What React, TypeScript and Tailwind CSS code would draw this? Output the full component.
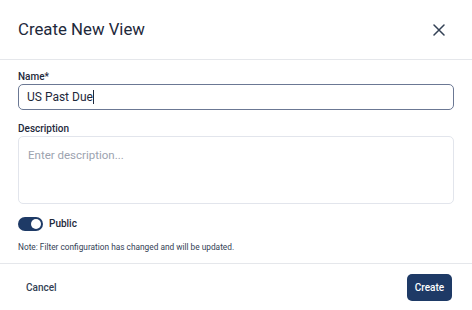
import React from 'react';

const App: React.FC = () => {
  return (
    <div className="w-[472px] h-[310px] bg-white flex flex-col text-[#1e293b]" style={{ fontFamily: 'Roboto, "Noto Sans", sans-serif' }}>
      {/* Header */}
      <div className="h-[60px] flex items-center justify-between pl-[18px] pr-[26px] border-b border-[#e5e7eb]">
        <h2 className="text-[16.8px] text-[#1e293b]">Create New View</h2>
        <button className="w-[14px] h-[14px] flex items-center justify-center text-[#334155]">
          <svg width="12" height="12" viewBox="0 0 12 12" fill="none" stroke="currentColor" strokeWidth="1.5" strokeLinecap="round">
            <path d="M1 1L11 11M11 1L1 11" />
          </svg>
        </button>
      </div>

      {/* Body */}
      <div className="flex-1 flex flex-col px-[18px] pt-[10px]">
        <label className="text-[10px] leading-[14px] font-medium text-[#1e293b]">Name*</label>
        <div className="h-[26px] border border-[#6b7894] rounded-[5px] flex items-center px-[8px] text-[12px] text-[#1e293b]">
          US Past Due<span className="w-px h-[14px] bg-[#1e293b]" />
        </div>

        <label className="mt-[12px] text-[10px] leading-[14px] font-medium text-[#1e293b]">Description</label>
        <div className="h-[68px] border border-[#e2e5ec] rounded-[5px] px-[9px] pt-[10px] text-[11.5px] text-[#9ca3af]">
          Enter description...
        </div>

        <div className="mt-[13px] flex items-center gap-[6px]">
          <div className="w-[25px] h-[14px] rounded-full bg-[#1e3a66] flex items-center justify-end pr-[2px]">
            <div className="w-[10px] h-[10px] rounded-full bg-white" />
          </div>
          <span className="text-[10px] leading-[14px] font-medium text-[#1e293b]">Public</span>
        </div>

        <p className="mt-[9px] text-[8.3px] leading-[14px] text-[#334155]">
          Note: Filter configuration has changed and will be updated.
        </p>
      </div>

      {/* Footer */}
      <div className="h-[47px] border-t border-[#e5e7eb] flex items-center justify-between pl-[26px] pr-[20px]">
        <button className="text-[10px] font-medium text-[#334155]">Cancel</button>
        <button className="h-[27px] w-[45px] rounded-[5px] bg-[#1e3a66] text-white text-[10px] font-medium">Create</button>
      </div>
    </div>
  );
};

export default App;
